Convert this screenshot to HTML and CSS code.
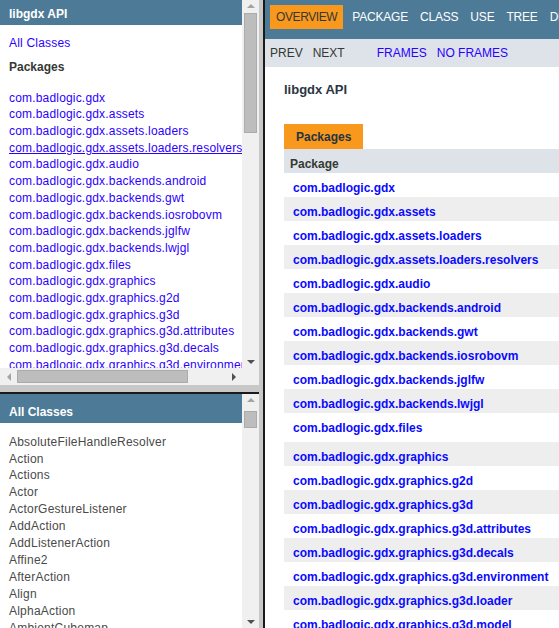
FILE: index.html
```html
<!DOCTYPE html>
<html>
<head>
<meta charset="utf-8">
<title>libgdx API</title>
<link rel="stylesheet" href="styles.css">
</head>
<body>
<div class="left-col">
  <div class="frame frame-top">
    <div class="pane">
      <div class="bar bar-top">libgdx API</div>
      <div class="idx">
        <a class="idx-link" href="#">All Classes</a>
        <h2 class="idx-h">Packages</h2>
        <ul class="pkg-list">
          <li><a href="#">com.badlogic.gdx</a></li>
          <li><a href="#">com.badlogic.gdx.assets</a></li>
          <li><a href="#">com.badlogic.gdx.assets.loaders</a></li>
          <li><a href="#" class="hover">com.badlogic.gdx.assets.loaders.resolvers</a></li>
          <li><a href="#">com.badlogic.gdx.audio</a></li>
          <li><a href="#">com.badlogic.gdx.backends.android</a></li>
          <li><a href="#">com.badlogic.gdx.backends.gwt</a></li>
          <li><a href="#">com.badlogic.gdx.backends.iosrobovm</a></li>
          <li><a href="#">com.badlogic.gdx.backends.jglfw</a></li>
          <li><a href="#">com.badlogic.gdx.backends.lwjgl</a></li>
          <li><a href="#">com.badlogic.gdx.files</a></li>
          <li><a href="#">com.badlogic.gdx.graphics</a></li>
          <li><a href="#">com.badlogic.gdx.graphics.g2d</a></li>
          <li><a href="#">com.badlogic.gdx.graphics.g3d</a></li>
          <li><a href="#">com.badlogic.gdx.graphics.g3d.attributes</a></li>
          <li><a href="#">com.badlogic.gdx.graphics.g3d.decals</a></li>
          <li><a href="#">com.badlogic.gdx.graphics.g3d.environment</a></li>
          <li><a href="#">com.badlogic.gdx.graphics.g3d.loader</a></li>
        </ul>
      </div>
    </div>
    <div class="vscroll">
      <div class="sb-btn"><span class="arr arr-up off"></span></div>
      <div class="thumb-v thumb-top"></div>
      <div class="sb-fill"></div>
      <div class="sb-btn"><span class="arr arr-down"></span></div>
    </div>
    <div class="hscroll">
      <div class="sb-btn-h"><span class="arr arr-left off"></span></div>
      <div class="thumb-h"></div>
      <div class="sb-fill"></div>
      <div class="sb-btn-h"><span class="arr arr-right"></span></div>
    </div>
    <div class="corner"></div>
  </div>
  <div class="hsplit"></div>
  <div class="frame frame-bottom">
    <div class="pane">
      <div class="bar bar-bottom">All Classes</div>
      <ul class="cls-list">
        <li>AbsoluteFileHandleResolver</li>
        <li>Action</li>
        <li>Actions</li>
        <li>Actor</li>
        <li>ActorGestureListener</li>
        <li>AddAction</li>
        <li>AddListenerAction</li>
        <li>Affine2</li>
        <li>AfterAction</li>
        <li>Align</li>
        <li>AlphaAction</li>
        <li>AmbientCubemap</li>
      </ul>
    </div>
    <div class="vscroll">
      <div class="sb-btn"><span class="arr arr-up off"></span></div>
      <div class="thumb-v thumb-bottom"></div>
      <div class="sb-fill"></div>
      <div class="sb-btn"><span class="arr arr-down"></span></div>
    </div>
  </div>
</div>
<div class="vsplit"></div>
<div class="main">
  <div class="topnav">
    <ul class="navlist">
      <li class="active">Overview</li>
      <li>Package</li>
      <li>Class</li>
      <li>Use</li>
      <li>Tree</li>
      <li>Deprecated</li>
      <li>Index</li>
      <li>Help</li>
    </ul>
  </div>
  <div class="subnav">
    <span class="sn-item">Prev</span>
    <span class="sn-item">Next</span>
    <a class="sn-item sn-link sn-gap" href="#">Frames</a>
    <a class="sn-item sn-link" href="#">No Frames</a>
  </div>
  <h1 class="title">libgdx API</h1>
  <div class="caption"><span>Packages</span></div>
  <div class="table">
    <div class="th">Package</div>
    <div class="row"><a href="#">com.badlogic.gdx</a></div>
    <div class="row alt"><a href="#">com.badlogic.gdx.assets</a></div>
    <div class="row"><a href="#">com.badlogic.gdx.assets.loaders</a></div>
    <div class="row alt"><a href="#">com.badlogic.gdx.assets.loaders.resolvers</a></div>
    <div class="row"><a href="#">com.badlogic.gdx.audio</a></div>
    <div class="row alt"><a href="#">com.badlogic.gdx.backends.android</a></div>
    <div class="row"><a href="#">com.badlogic.gdx.backends.gwt</a></div>
    <div class="row alt"><a href="#">com.badlogic.gdx.backends.iosrobovm</a></div>
    <div class="row"><a href="#">com.badlogic.gdx.backends.jglfw</a></div>
    <div class="row alt"><a href="#">com.badlogic.gdx.backends.lwjgl</a></div>
    <div class="row tall"><a href="#">com.badlogic.gdx.files</a></div>
    <div class="row alt"><a href="#">com.badlogic.gdx.graphics</a></div>
    <div class="row"><a href="#">com.badlogic.gdx.graphics.g2d</a></div>
    <div class="row alt"><a href="#">com.badlogic.gdx.graphics.g3d</a></div>
    <div class="row"><a href="#">com.badlogic.gdx.graphics.g3d.attributes</a></div>
    <div class="row alt"><a href="#">com.badlogic.gdx.graphics.g3d.decals</a></div>
    <div class="row"><a href="#">com.badlogic.gdx.graphics.g3d.environment</a></div>
    <div class="row alt"><a href="#">com.badlogic.gdx.graphics.g3d.loader</a></div>
    <div class="row"><a href="#">com.badlogic.gdx.graphics.g3d.model</a></div>
  </div>
</div>
</body>
</html>
```
FILE: styles.css
```css
* { box-sizing: border-box; }
html, body { margin: 0; padding: 0; }
body {
  display: flex;
  width: 559px;
  height: 628px;
  overflow: hidden;
  background: #fff;
  font-family: "Liberation Sans", Arial, sans-serif;
  font-size: 12px;
  color: #353833;
}
a { text-decoration: none; }

/* left column */
.left-col {
  width: 259px;
  flex: none;
  display: flex;
  flex-direction: column;
}
.frame { display: grid; overflow: hidden; }
.frame-top {
  height: 385px;
  flex: none;
  grid-template-columns: 242px 17px;
  grid-template-rows: 368px 17px;
}
.frame-bottom {
  flex: 1;
  grid-template-columns: 242px 17px;
  grid-template-rows: 1fr;
}
.pane { overflow: hidden; background: #fff; min-height: 0; }

.bar {
  background: #4d7a97;
  color: #fff;
  font-weight: bold;
  padding-left: 9px;
  line-height: 14px;
}
.bar-top { height: 25px; padding-top: 7px; }
.bar-bottom { height: 29px; padding-top: 11px; }

.idx { padding: 11px 0 0 9px; white-space: nowrap; }
.idx-link { display: block; line-height: 14px; color: #2a00ff; letter-spacing: 0.2px; }
.idx-h {
  margin: 10px 0 0;
  font-size: 12px;
  line-height: 14px;
  font-weight: bold;
  color: #353833;
}
.pkg-list { list-style: none; margin: 14.6px 0 0; padding: 0; letter-spacing: 0.18px; }
.pkg-list li { padding-top: 2px; line-height: 14.7px; }
.pkg-list a { color: #2a00ff; }
.pkg-list a.hover { text-decoration: underline; }

.cls-list { list-style: none; margin: 9.6px 0 0; padding: 0 0 0 9px; white-space: nowrap; letter-spacing: 0.22px; }
.cls-list li { padding-top: 2px; line-height: 14.9px; color: #4a4a4a; }

/* scrollbars */
.vscroll {
  background: #f0f0f0;
  display: flex;
  flex-direction: column;
  align-items: center;
  min-height: 0;
}
.sb-btn { height: 12px; width: 17px; flex: none; display: flex; align-items: center; justify-content: center; }
.sb-fill { flex: 1; }
.thumb-v {
  width: 13px;
  background: #bdbdbd;
  border: 1px solid #ababab;
  flex: none;
}
.thumb-top { height: 120px; margin-top: 1px; }
.thumb-bottom { height: 17px; margin-top: 5px; }
.hscroll {
  background: #f0f0f0;
  display: flex;
  align-items: center;
}
.sb-btn-h { width: 17px; height: 17px; flex: none; display: flex; align-items: center; justify-content: center; }
.thumb-h {
  width: 171px;
  height: 13px;
  background: #bdbdbd;
  border: 1px solid #ababab;
  flex: none;
}
.corner { background: #f0f0f0; }

.arr { width: 0; height: 0; display: block; }
.arr-up { border-left: 4px solid transparent; border-right: 4px solid transparent; border-bottom: 4px solid #505050; }
.arr-down { border-left: 4px solid transparent; border-right: 4px solid transparent; border-top: 4px solid #505050; }
.arr-left { border-top: 4px solid transparent; border-bottom: 4px solid transparent; border-right: 4px solid #505050; }
.arr-right { border-top: 4px solid transparent; border-bottom: 4px solid transparent; border-left: 4px solid #505050; }
.arr-up.off { border-bottom-color: #a3a3a3; }
.arr-left.off { border-right-color: #a3a3a3; }

/* splitters */
.hsplit {
  height: 9px;
  flex: none;
  background: #c8c8c8;
  border-bottom: 2px solid #1a1a1a;
}
.vsplit {
  width: 6px;
  flex: none;
  background: #c8c8c8;
  border-right: 2px solid #1a1a1a;
}

/* main */
.main { flex: 1; overflow: hidden; min-width: 0; }
.topnav { background: #4d7a97; height: 39px; padding: 5px 0 0 5px; }
.navlist { list-style: none; margin: 0; padding: 0; display: flex; white-space: nowrap; }
.navlist li {
  padding: 5px 6px;
  line-height: 14px;
  text-transform: uppercase;
  color: #fff;
  flex: none;
  letter-spacing: -0.2px;
}
.navlist li.active { background: #f8981d; color: #353833; letter-spacing: -0.4px; margin-right: 3px; }

.subnav {
  background: #dee3e9;
  height: 28px;
  padding: 7px 0 0 5px;
  display: flex;
  gap: 10px;
  white-space: nowrap;
}
.sn-item { line-height: 14px; text-transform: uppercase; color: #353833; }
.sn-link { color: #2a00ff; }
.sn-gap { margin-left: 22px; }

.title {
  margin: 15px 0 0 19px;
  font-size: 13px;
  line-height: 16px;
  font-weight: bold;
  color: #2c3542;
}
.caption { margin: 26px 0 0 19px; display: flex; }
.caption span {
  background: #f8981d;
  padding: 6px 12px 5px;
  line-height: 14px;
  font-weight: bold;
  color: #253441;
}
.table { margin-left: 19px; width: 600px; }
.th {
  background: #dee3e9;
  padding: 8px 3px 2px 6px;
  line-height: 14px;
  font-weight: bold;
  color: #353833;
}
.row {
  padding: 8px 3px 2px 9px;
  line-height: 14px;
  background: #fff;
  white-space: nowrap;
}
.row.alt { background: #eeeeef; }
.row.tall { padding-bottom: 7px; }
.row a { color: #0a0aff; font-weight: bold; }
```
